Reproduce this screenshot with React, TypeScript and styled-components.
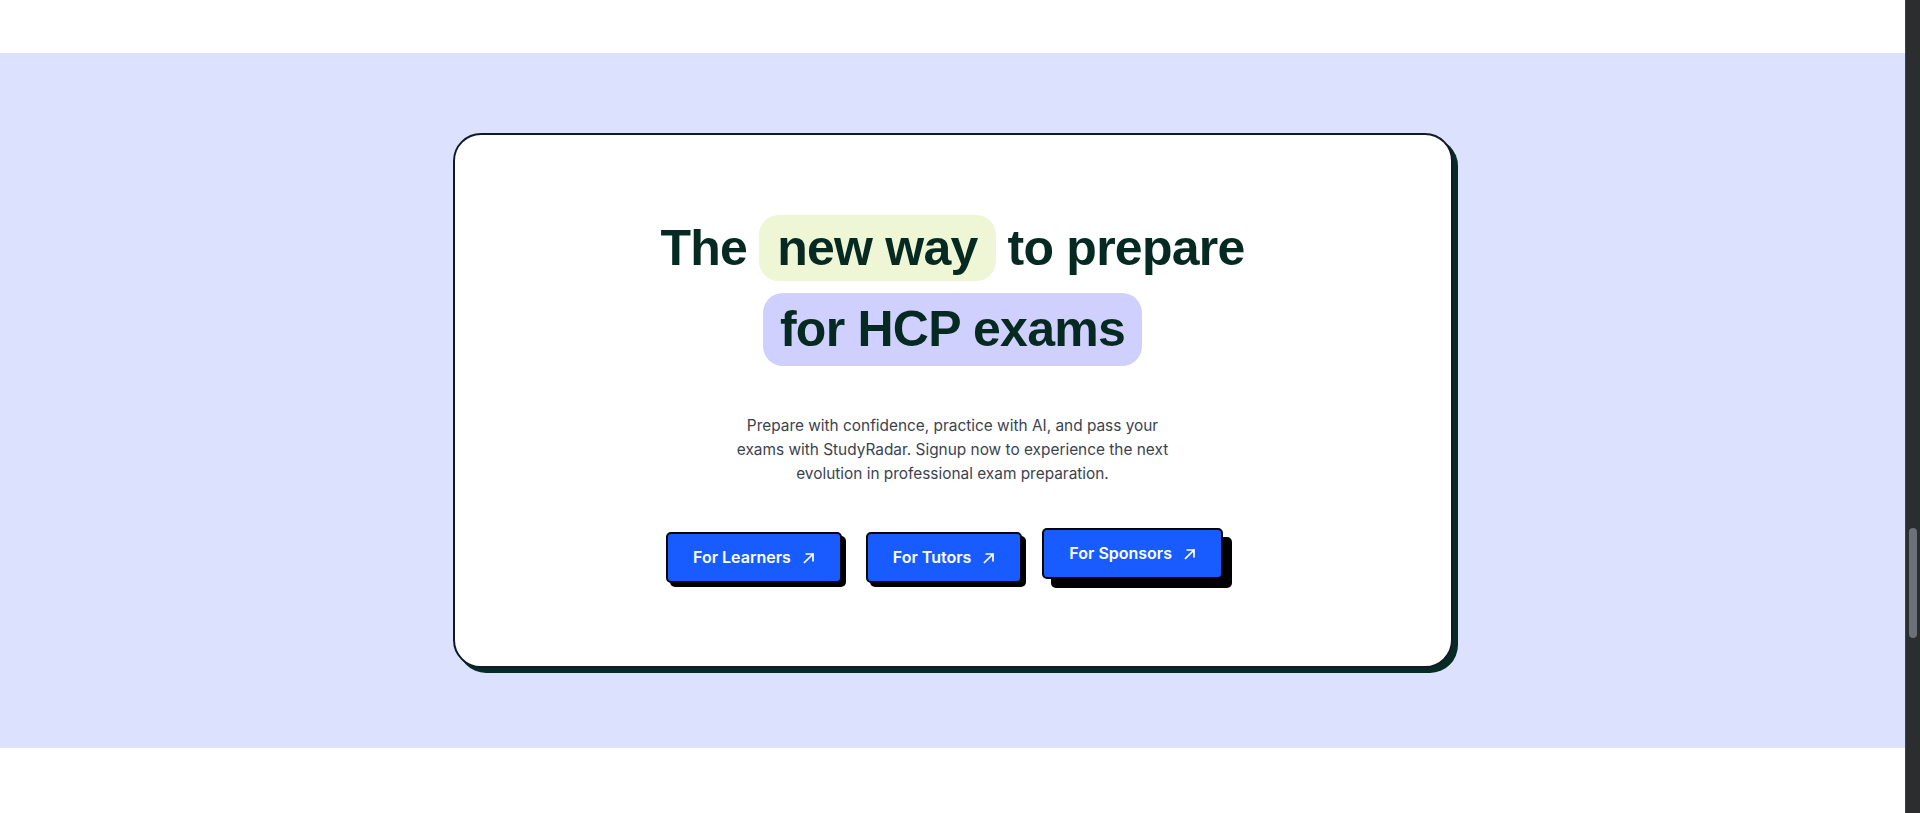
import styled, { createGlobalStyle } from "styled-components";

const GlobalStyle = createGlobalStyle`
  html, body {
    margin: 0;
    padding: 0;
    height: 100%;
    overflow: hidden;
    background: #ffffff;
  }
  #root {
    height: 100%;
  }
  * {
    box-sizing: border-box;
  }
`;

const Page = styled.div`
  display: flex;
  flex-direction: row;
  height: 100vh;
  width: 100vw;
`;

const Main = styled.main`
  flex: 1;
  display: flex;
  flex-direction: column;
  background: #ffffff;
`;

const TopSpacer = styled.div`
  height: 53px;
  flex-shrink: 0;
`;

const Band = styled.section`
  display: flex;
  justify-content: center;
  padding: 80px 0;
  background: #dce2fe;
`;

const Card = styled.div`
  width: 1000px;
  display: flex;
  flex-direction: column;
  align-items: center;
  padding: 80px 0 83px;
  background: #ffffff;
  border: 2px solid #111b28;
  border-radius: 28px;
  box-shadow: 5px 5px 0 #082a24;
`;

const Headline = styled.h1`
  margin: 0;
  display: flex;
  flex-direction: column;
  align-items: center;
  gap: 12px;
  font-family: "Liberation Sans", Arial, sans-serif;
  font-size: 50px;
  font-weight: 700;
  letter-spacing: -0.015em;
  line-height: 50px;
  color: #062a22;
`;

const HeadRow = styled.div`
  display: flex;
  flex-direction: row;
  justify-content: center;
  align-items: baseline;
  gap: 12px;
`;

interface HighlightProps {
  $tone: "lime" | "lavender";
}

const Highlight = styled.span<HighlightProps>`
  display: inline-block;
  border-radius: 20px;
  background: ${props => (props.$tone === "lime" ? "#eef6d6" : "#cfd0fe")};
  padding: ${props => (props.$tone === "lime" ? "8px 18px 8px" : "11px 17px 12px")};
`;

const Lead = styled.p`
  margin: 48px 0 0;
  font-family: Inter, "Liberation Sans", sans-serif;
  font-size: 15.4px;
  line-height: 24px;
  text-align: center;
  color: #3b4350;
`;

const ButtonRow = styled.div`
  display: flex;
  flex-direction: row;
  gap: 24px;
  margin-top: 46px;
  margin-right: 12px;
`;

interface CtaProps {
  $raised?: boolean;
}

const Cta = styled.button<CtaProps>`
  display: flex;
  align-items: center;
  gap: 12px;
  padding: 12px 25px;
  font-family: Inter, "Liberation Sans", sans-serif;
  font-size: 16px;
  font-weight: 600;
  line-height: 23px;
  color: #ffffff;
  background: #185cff;
  border: 2px solid #050505;
  border-radius: 5px;
  cursor: pointer;
  box-shadow: ${props => (props.$raised ? "9px 9px 0 #000000" : "4px 4px 0 #000000")};
  transform: ${props => (props.$raised ? "translate(-4px, -4px)" : "none")};
`;

const ArrowIcon = styled.svg`
  width: 12px;
  height: 12px;
  flex-shrink: 0;
`;

interface TrackProps {
  $offset: number;
}

const ScrollTrack = styled.div<TrackProps>`
  width: 15px;
  flex-shrink: 0;
  display: flex;
  justify-content: center;
  padding-top: ${props => props.$offset}px;
  background: #2b2e2e;
  border-left: 1px solid #3d4242;
`;

const ScrollThumb = styled.div`
  width: 8px;
  height: 110px;
  border-radius: 4px;
  background: #6b7176;
`;

const Arrow = () => (
  <ArrowIcon viewBox="0 0 12 12" fill="none">
    <path
      d="M1.6 10.4 L10 2 M3.4 2 H10 V8.6"
      stroke="#ffffff"
      strokeWidth="1.7"
      strokeLinecap="square"
    />
  </ArrowIcon>
);

const buttons = [
  { label: "For Learners" },
  { label: "For Tutors" },
  { label: "For Sponsors", raised: true },
];

const App = () => {
  return (
    <>
      <GlobalStyle />
      <Page>
        <Main>
          <TopSpacer />
          <Band>
            <Card>
              <Headline>
                <HeadRow>
                  <span>The</span>
                  <Highlight $tone="lime">new way</Highlight>
                  <span>to prepare</span>
                </HeadRow>
                <HeadRow>
                  <Highlight $tone="lavender">for HCP exams</Highlight>
                </HeadRow>
              </Headline>
              <Lead>
                Prepare with confidence, practice with AI, and pass your
                <br />
                exams with StudyRadar. Signup now to experience the next
                <br />
                evolution in professional exam preparation.
              </Lead>
              <ButtonRow>
                {buttons.map(b => (
                  <Cta key={b.label} $raised={b.raised}>
                    {b.label}
                    <Arrow />
                  </Cta>
                ))}
              </ButtonRow>
            </Card>
          </Band>
        </Main>
        <ScrollTrack $offset={528}>
          <ScrollThumb />
        </ScrollTrack>
      </Page>
    </>
  );
};

export default App;
